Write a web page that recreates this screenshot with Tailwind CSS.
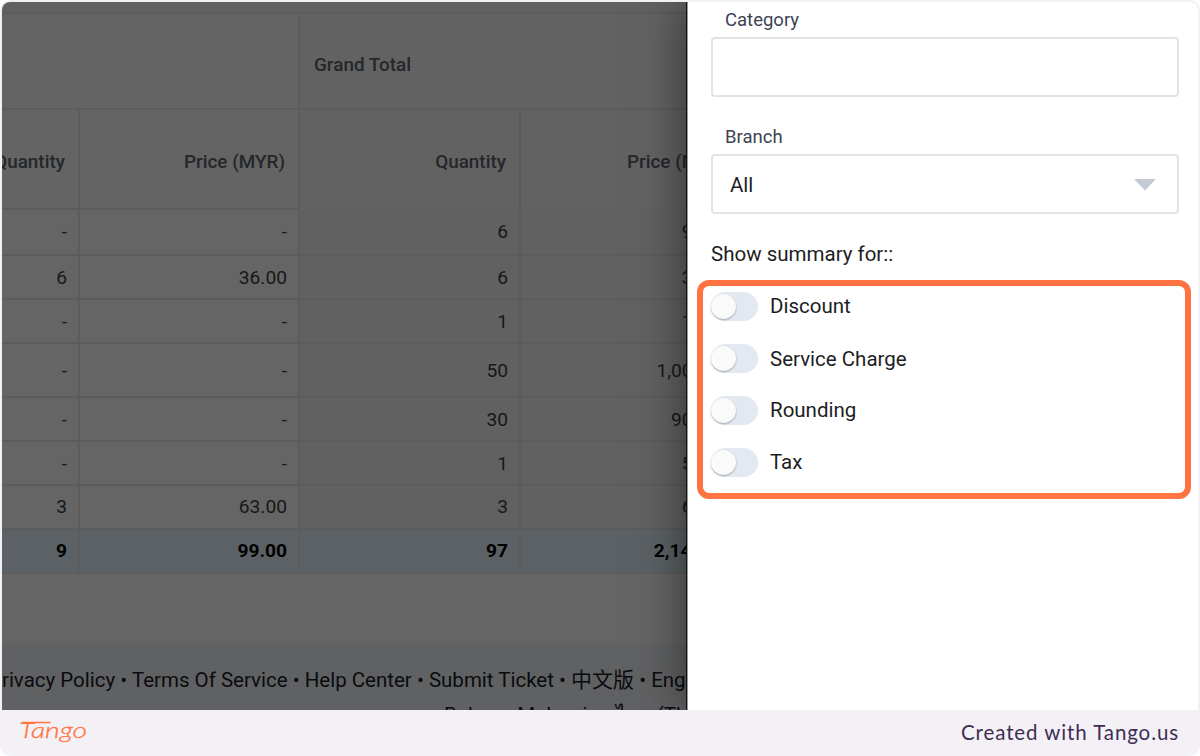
<!DOCTYPE html>
<html lang="en">
  <head>
    <meta charset="UTF-8">
    <meta name="viewport" content="width=device-width, initial-scale=1.0">
    <title>Show summary for</title>
    <script src="https://cdn.jsdelivr.net/npm/@tailwindcss/browser@4"></script>
  </head>
  <body class="bg-white">
    <div class="flex flex-col w-[1200px] h-[756px] rounded-[10px] overflow-hidden bg-[#f3f1f6] pt-[2px]">
      <main class="relative flex mx-[2px] h-[708px] shrink-0 rounded-t-[8px] overflow-hidden bg-white font-[Roboto,'Noto_Sans_CJK_SC',sans-serif]">

        <!-- Report page, behind the backdrop -->
        <div class="relative w-[684px] shrink-0 overflow-hidden bg-[#fcfcfc] flex flex-col">
          <div class="w-[884px] -ml-[143px] shrink-0 text-[19.2px] text-[#404040] text-right">
            <div class="h-[10px] bg-[#f0f4f4]"></div>
            <div class="grid grid-cols-[441px_443px] h-[98px] border-y-2 border-[#e6e6e6] bg-[#f9f9f9] text-[#5c616b] font-medium text-[18.9px] text-left">
              <div class="border-r-2 border-[#e6e6e6]"></div>
              <div class="flex items-center pl-[14px] pt-[8px] bg-[#f6f6f6]">Grand Total</div>
            </div>
            <div class="grid grid-cols-[221px_220px_221px_222px] h-[100px] border-b-2 border-[#e6e6e6] bg-[#f9f9f9] text-[#5c616b] font-medium text-[18.9px] leading-[100px] *:border-r-2 *:border-[#e6e6e6] *:pr-[13px] *:pt-[2px]">
              <div>Quantity</div><div>Price (MYR)</div><div class="bg-[#f6f6f6]">Quantity</div><div class="bg-[#f6f6f6]">Price (MYR)</div>
            </div>
            <div class="grid grid-cols-[221px_220px_221px_222px] h-[46px] border-b-2 border-[#e6e6e6] leading-[44px] *:border-r-2 *:border-[#e6e6e6] *:pr-[11px]">
              <div>-</div><div>-</div><div class="bg-[#f2f2f2]">6</div><div class="bg-[#f2f2f2]">95.00</div>
            </div>
            <div class="grid grid-cols-[221px_220px_221px_222px] h-[44px] border-b-2 border-[#e6e6e6] leading-[43px] *:border-r-2 *:border-[#e6e6e6] *:pr-[11px] *:h-[42px]">
              <div>6</div><div>36.00</div><div class="bg-[#f2f2f2]">6</div><div class="bg-[#f2f2f2]">36.00</div>
            </div>
            <div class="grid grid-cols-[221px_220px_221px_222px] h-[44px] border-b-2 border-[#e6e6e6] leading-[43px] *:border-r-2 *:border-[#e6e6e6] *:pr-[11px] *:h-[42px]">
              <div>-</div><div>-</div><div class="bg-[#f2f2f2]">1</div><div class="bg-[#f2f2f2]">10.00</div>
            </div>
            <div class="grid grid-cols-[221px_220px_221px_222px] h-[54px] border-b-2 border-[#e6e6e6] leading-[53px] *:border-r-2 *:border-[#e6e6e6] *:pr-[11px] *:h-[52px]">
              <div>-</div><div>-</div><div class="bg-[#f2f2f2]">50</div><div class="bg-[#f2f2f2]">1,000.00</div>
            </div>
            <div class="grid grid-cols-[221px_220px_221px_222px] h-[44px] border-b-2 border-[#e6e6e6] leading-[43px] *:border-r-2 *:border-[#e6e6e6] *:pr-[11px] *:h-[42px]">
              <div>-</div><div>-</div><div class="bg-[#f2f2f2]">30</div><div class="bg-[#f2f2f2]">900.00</div>
            </div>
            <div class="grid grid-cols-[221px_220px_221px_222px] h-[44px] border-b-2 border-[#e6e6e6] leading-[43px] *:border-r-2 *:border-[#e6e6e6] *:pr-[11px] *:h-[42px]">
              <div>-</div><div>-</div><div class="bg-[#f2f2f2]">1</div><div class="bg-[#f2f2f2]">50.00</div>
            </div>
            <div class="grid grid-cols-[221px_220px_221px_222px] h-[44px] border-b-2 border-[#e6e6e6] leading-[42px] *:border-r-2 *:border-[#e6e6e6] *:pr-[11px]">
              <div>3</div><div>63.00</div><div class="bg-[#f2f2f2]">3</div><div class="bg-[#f2f2f2]">63.00</div>
            </div>
            <div class="grid grid-cols-[221px_220px_221px_222px] h-[44px] border-b-2 border-[#e6e6e6] leading-[42px] bg-[#e3f2f9] text-black font-bold *:border-r-2 *:border-[#e6e6e6] *:pr-[11px]">
              <div>9</div><div>99.00</div><div>97</div><div>2,144.00</div>
            </div>
          </div>
          <footer class="mt-[70px] pt-[19px] grow bg-[#eff2f6] text-[20.5px] leading-[35px] text-[#1b1d28] whitespace-nowrap">
            <div class="-ml-[13px]">Privacy Policy • Terms Of Service • Help Center • Submit Ticket • <span class="text-[21px]">中文版</span> • English</div>
            <div class="ml-[442px]">Bahasa Malaysia • ไทย (Thai)</div>
          </footer>
          <div class="absolute inset-0 bg-black/60"></div>
        </div>

        <!-- Filter drawer -->
        <aside class="relative grow bg-white border-l border-[#111] shadow-[0_0_45px_rgba(0,0,0,0.5)]">
          <div class="h-full border-l border-[#999] pl-[23px] pr-[19px] text-[#222a3a]">
            <label class="block h-[35px] pl-[14px] text-[18.5px] leading-[36px] text-[#3c4353]">Category</label>
            <div class="h-[60px] border-2 border-[#e2e3e4] rounded-[4px]"></div>
            <label class="block h-[57px] pl-[14px] pt-[22px] text-[18.5px] leading-[36px] text-[#3c4353]">Branch</label>
            <div class="flex items-center justify-between h-[60px] border-2 border-[#e2e3e4] rounded-[4px] pt-[2px] pl-[17px] pr-[20px] text-[20.5px] text-[#1c1e24]">
              All
              <svg class="w-[24px] h-[12px]" viewBox="0 0 24 12"><path d="M1 0h22L12 11.500z" fill="#c4cad4"/></svg>
            </div>
            <p class="mt-[22px] h-[56px] text-[20.5px] leading-[36px] text-[#1c1e24]">Show summary for::</p>
            <div class="flex flex-col gap-[23px] text-[20.5px] leading-[29px] text-[#1c1e24]">
              <div class="flex items-center gap-[12px] h-[29px]">
                <span class="w-[47px] h-[29px] rounded-full bg-[#e4e8f1] pt-[2px]"><span class="block size-[25px] rounded-full bg-[#fafafa] shadow-[0_1px_2px_rgba(0,0,0,0.3)]"></span></span>
                Discount
              </div>
              <div class="flex items-center gap-[12px] h-[29px]">
                <span class="w-[47px] h-[29px] rounded-full bg-[#e4e8f1] pt-[2px]"><span class="block size-[25px] rounded-full bg-[#fafafa] shadow-[0_1px_2px_rgba(0,0,0,0.3)]"></span></span>
                <span class="pt-px">Service Charge</span>
              </div>
              <div class="flex items-center gap-[12px] h-[29px]">
                <span class="w-[47px] h-[29px] rounded-full bg-[#e4e8f1] pt-[2px]"><span class="block size-[25px] rounded-full bg-[#fafafa] shadow-[0_1px_2px_rgba(0,0,0,0.3)]"></span></span>
                Rounding
              </div>
              <div class="flex items-center gap-[12px] h-[29px]">
                <span class="w-[47px] h-[29px] rounded-full bg-[#e4e8f1] pt-[2px]"><span class="block size-[25px] rounded-full bg-[#fafafa] shadow-[0_1px_2px_rgba(0,0,0,0.3)]"></span></span>
                Tax
              </div>
            </div>
          </div>
        </aside>

        <!-- Highlight ring around the toggles -->
        <div class="absolute left-[695px] top-[278px] w-[494px] h-[219px] border-[6px] border-[#ff7442] rounded-[12px]"></div>
      </main>

      <div class="flex items-center justify-between grow pl-[20px] pr-[21px]">
        <svg class="w-[70px] h-[36px]" viewBox="0 0 70 36">
          <path d="M1.500 7.500H30.500" stroke="#ff7442" stroke-width="1.400"/>
          <text x="-1" y="23" font-family="Lato, sans-serif" font-style="italic" font-weight="300" font-size="22.500" textLength="68" lengthAdjust="spacingAndGlyphs" fill="#ff7442" stroke="#ff7442" stroke-width="0.300">Tango</text>
        </svg>
        <span class="pb-[2px] font-[Lato,sans-serif] text-[20.5px] tracking-[0.9px] text-[#3f2d54]">Created with Tango.us</span>
      </div>
    </div>
  </body>
</html>
